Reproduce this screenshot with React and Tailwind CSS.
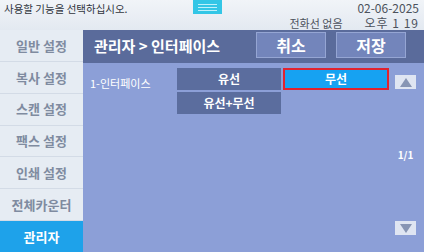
export default function App() {
  const menu = ["일반 설정", "복사 설정", "스캔 설정", "팩스 설정", "인쇄 설정", "전체카운터", "관리자"];
  return (
    <div
      className="w-[424px] h-[252px] overflow-hidden flex flex-col bg-[#e6ecf3]"
      style={{ fontFamily: '"Noto Sans CJK KR", "Noto Sans", sans-serif' }}
    >
      {/* Top status bar */}
      <div className="h-[30px] flex bg-gradient-to-b from-[#f1f4f8] to-[#e3e9f1]">
        <div className="pl-[4px] pt-[2px] text-[10.5px] leading-[14px] text-[#30353d] w-[193px]">
          사용할 기능을 선택하십시오.
        </div>
        <div className="w-[29px] h-[14px] bg-[#33c6e6] flex flex-col justify-center gap-[2px] px-[5px]">
          <div className="h-[1px] bg-[#bff1fb]" />
          <div className="h-[1px] bg-[#bff1fb]" />
          <div className="h-[1px] bg-[#bff1fb]" />
        </div>
        <div className="flex-1 flex flex-col items-end pr-[5px] text-[#4c525c]">
          <div className="text-[12px] leading-[12px] pt-[2px]">02-06-2025</div>
          <div className="flex items-end gap-[22px] text-[11px] leading-[12px] mt-[3px]">
            <span>전화선 없음</span>
            <span className="text-[12px] tracking-[1px]">오후 1 19</span>
          </div>
        </div>
      </div>

      <div className="flex flex-1">
        {/* Sidebar */}
        <div className="w-[83px] flex flex-col">
          {menu.map((m, i) =>
            i === menu.length - 1 ? (
              <div
                key={m}
                className="flex-1 flex items-center justify-center bg-[#1ea2ea] text-white text-[13px] font-bold"
              >
                {m}
              </div>
            ) : (
              <div
                key={m}
                className="flex-1 flex items-center justify-center border-b border-[#d3dbe6] text-[#7f8ba0] text-[13px] font-bold"
              >
                {m}
              </div>
            )
          )}
        </div>

        {/* Main */}
        <div className="flex-1 flex flex-col bg-[#8c9fd7]">
          <div className="h-[33px] bg-[#5a6b9b] flex items-start">
            <div className="flex-1 pl-[11px] pt-[6px] text-white text-[15px] font-bold leading-[20px]">
              관리자 &gt; 인터페이스
            </div>
            <button className="mt-[2px] w-[70px] h-[26px] bg-[#7385bb] border border-[#95a5d3] text-white text-[16px] font-bold">
              취소
            </button>
            <button className="mt-[2px] ml-[10px] mr-[18px] w-[70px] h-[26px] bg-[#7385bb] border border-[#95a5d3] text-white text-[16px] font-bold">
              저장
            </button>
          </div>

          <div className="flex-1 flex">
            <div className="w-[94px] pl-[7px] pt-[13px] text-white text-[11px] leading-[14px]">
              1-인터페이스
            </div>
            <div className="pt-[5px] flex flex-col gap-[2px]">
              <div className="flex gap-[2px]">
                <div className="w-[104px] h-[22px] bg-[#5b6d9e] text-white text-[12px] font-bold flex items-center justify-center">
                  유선
                </div>
                <div className="w-[106px] h-[22px] bg-[#16a2f2] border-2 border-[#e0232f] text-white text-[12px] font-bold flex items-center justify-center">
                  무선
                </div>
              </div>
              <div className="w-[104px] h-[22px] bg-[#5b6d9e] text-white text-[12px] font-bold flex items-center justify-center">
                유선+무선
              </div>
            </div>
            <div className="ml-[6px] w-[21px] pt-[12px] pb-[17px] flex flex-col justify-between items-center">
              <div className="w-[21px] h-[14px] bg-[#dfe5f2] flex items-center justify-center">
                <div className="w-0 h-0 border-l-[6px] border-r-[6px] border-b-[9px] border-l-transparent border-r-transparent border-b-[#8795b4]" />
              </div>
              <div className="text-white text-[10px] leading-[12px] font-bold">1/1</div>
              <div className="w-[21px] h-[14px] bg-[#dfe5f2] flex items-center justify-center">
                <div className="w-0 h-0 border-l-[6px] border-r-[6px] border-t-[9px] border-l-transparent border-r-transparent border-t-[#8795b4]" />
              </div>
            </div>
          </div>
        </div>
      </div>
    </div>
  );
}
